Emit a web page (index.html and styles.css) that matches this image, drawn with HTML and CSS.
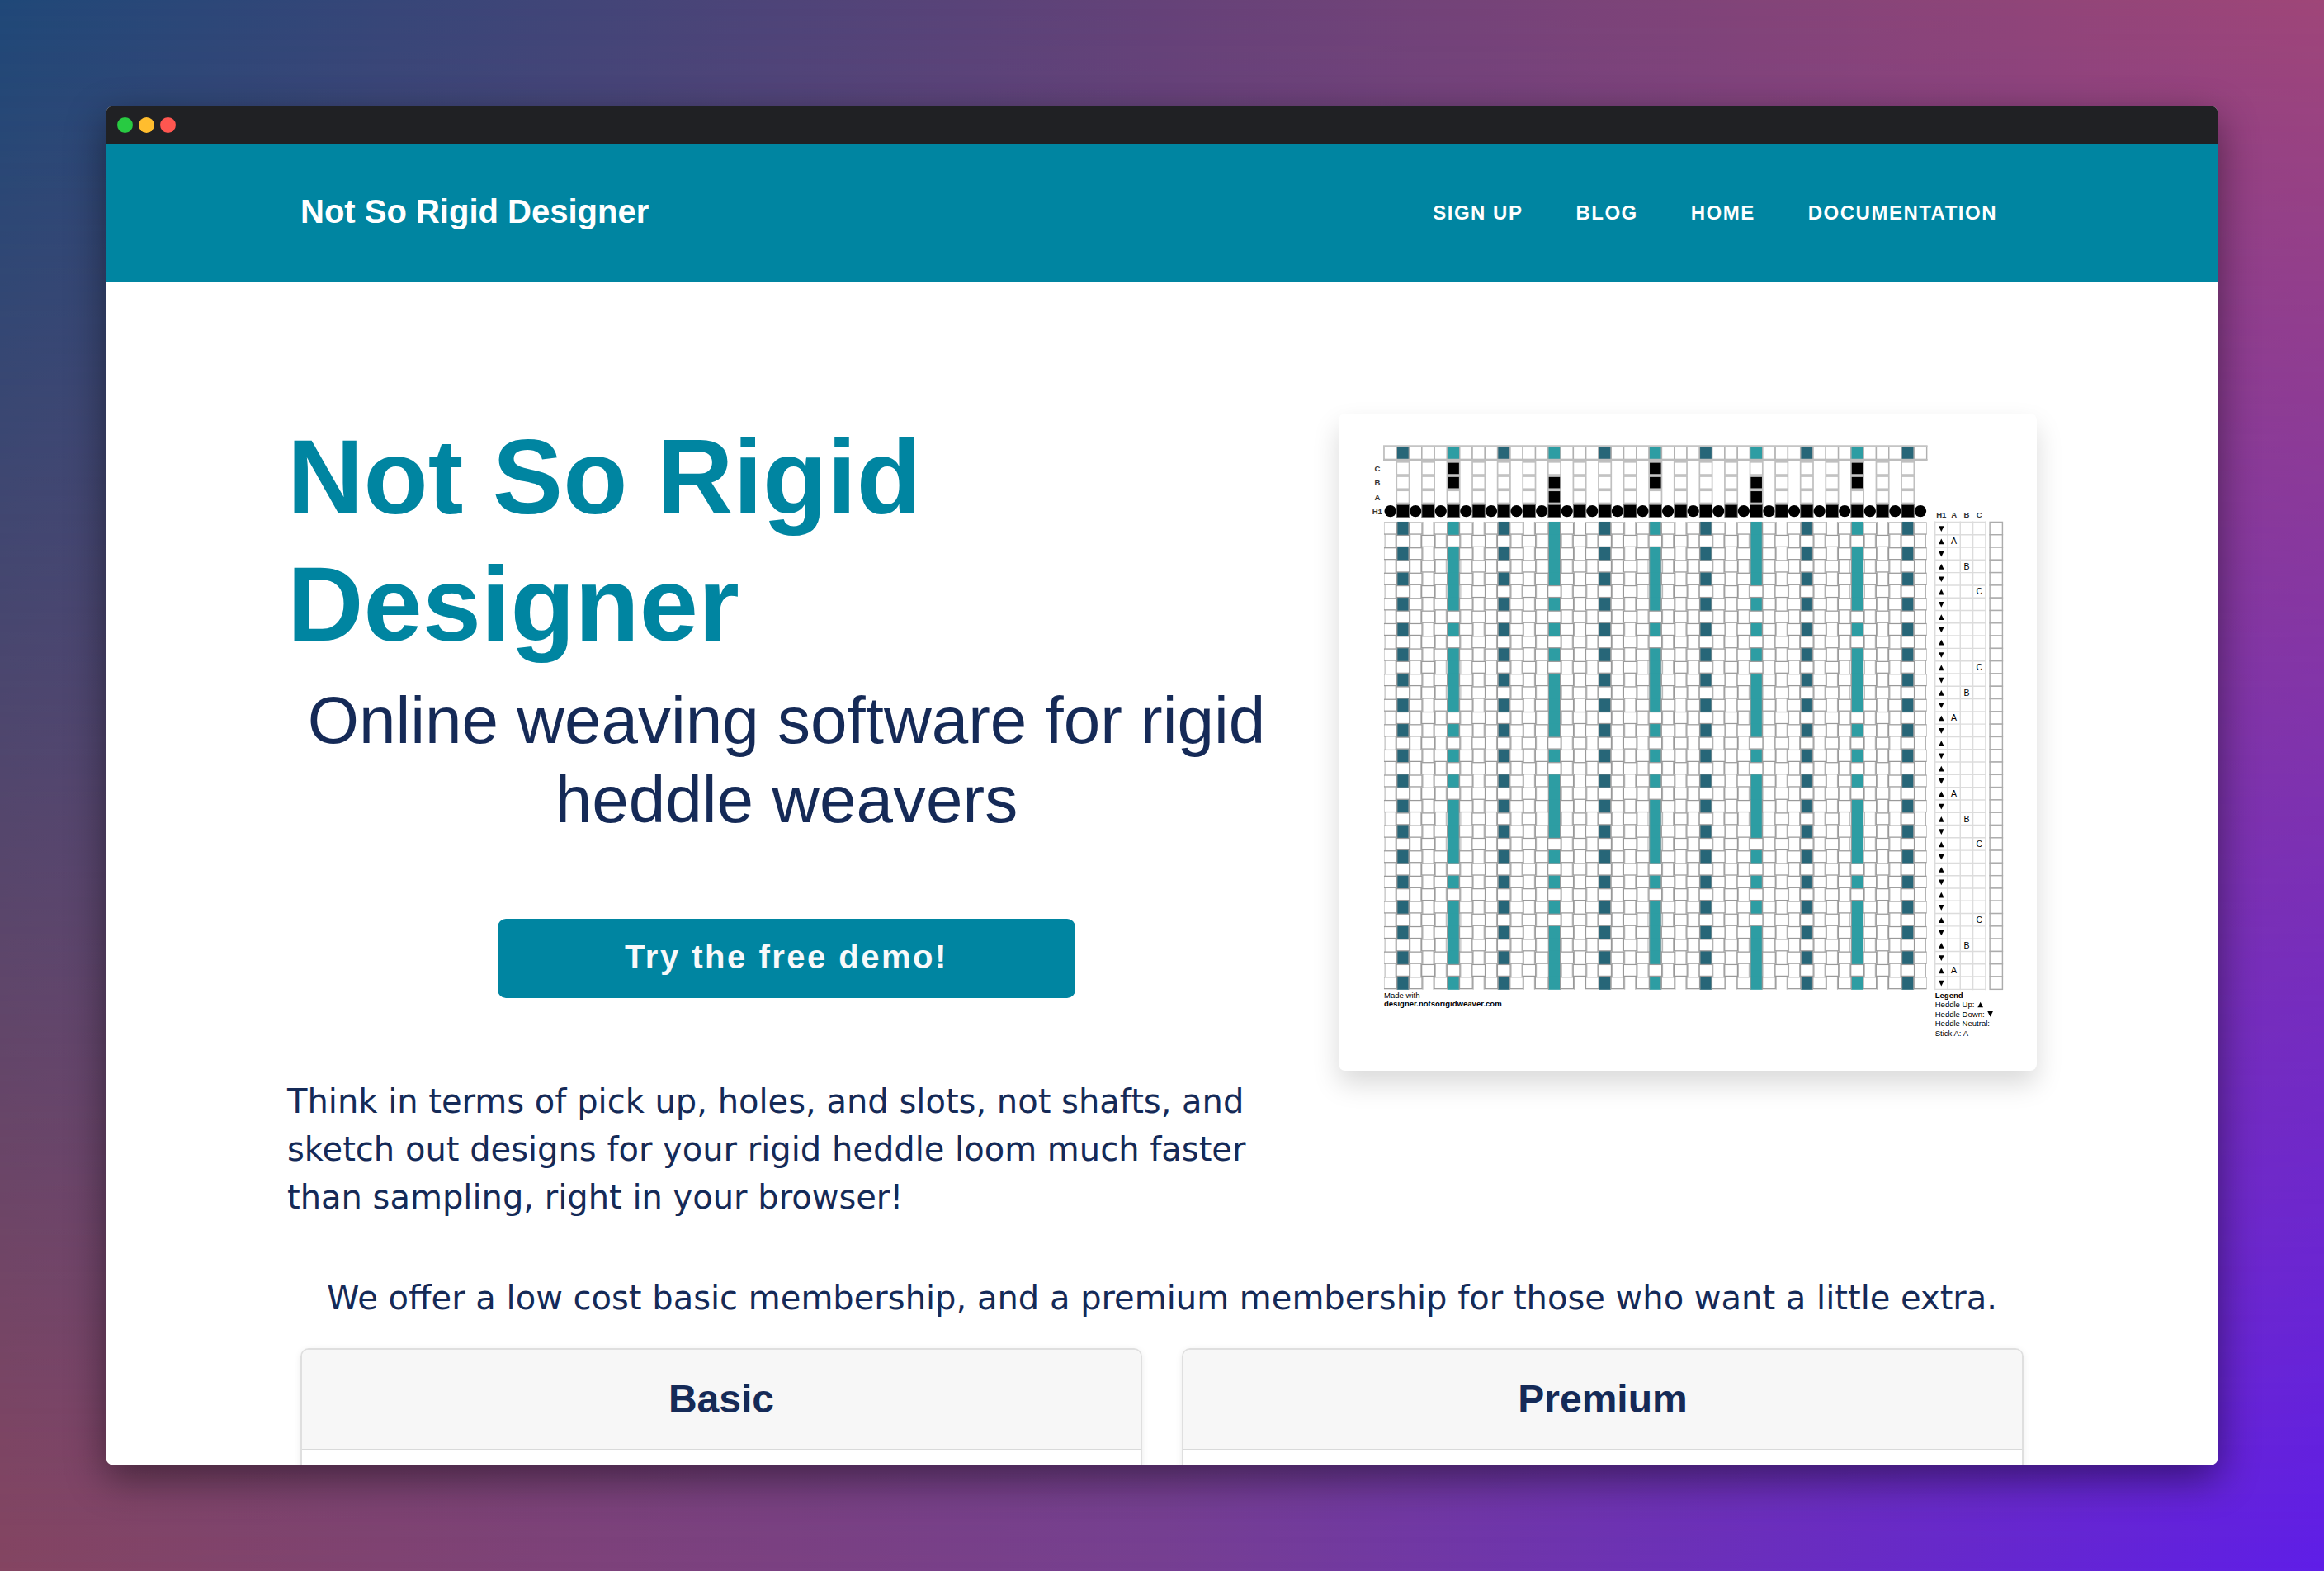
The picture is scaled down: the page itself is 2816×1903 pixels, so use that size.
FILE: index.html
```html
<!DOCTYPE html>
<html lang="en">
<head>
<meta charset="utf-8">
<title>Not So Rigid Designer</title>
<link rel="stylesheet" href="styles.css">
</head>
<body>
<div class="window">
  <div class="titlebar">
    <span class="dot dot-green"></span>
    <span class="dot dot-yellow"></span>
    <span class="dot dot-red"></span>
  </div>
  <header class="site-header">
    <a class="brand" href="#">Not So Rigid Designer</a>
    <nav class="site-nav">
      <a href="#">SIGN UP</a>
      <a href="#">BLOG</a>
      <a href="#">HOME</a>
      <a href="#">DOCUMENTATION</a>
    </nav>
  </header>
  <main class="content">
    <section class="hero">
      <div class="hero-text">
        <h1>Not So Rigid Designer</h1>
        <p class="subtitle">Online weaving software for rigid heddle weavers</p>
        <button class="cta" type="button">Try the free demo!</button>
        <p class="lead">Think in terms of pick up, holes, and slots, not shafts, and sketch out designs for your rigid heddle loom much faster than sampling, right in your browser!</p>
      </div>
      <figure class="draft">
        <svg id="draft" viewBox="0 0 885 833" role="img" aria-label="Weaving draft"></svg>
      </figure>
    </section>
    <p class="offer">We offer a low cost basic membership, and a premium membership for those who want a little extra.</p>
    <section class="plans">
      <article class="plan">
        <h2>Basic</h2>
        <div class="plan-body"></div>
      </article>
      <article class="plan">
        <h2>Premium</h2>
        <div class="plan-body"></div>
      </article>
    </section>
  </main>
</div>
<script src="draft.js"></script>
</body>
</html>
```
FILE: styles.css
```css
* {
  box-sizing: border-box;
}

body {
  position: relative;
  margin: 0;
  height: 100vh;
  padding: 128px;
  overflow: hidden;
  font-family: "Liberation Sans", Arial, sans-serif;
  color: #152a57;
  background: linear-gradient(to right, #854562, #763f92 50%, #5f1ee8);
}

body::before {
  content: "";
  position: absolute;
  inset: 0;
  background: linear-gradient(to right, #1f4878, #654278 50%, #9f4678);
  -webkit-mask-image: linear-gradient(to bottom, #000, transparent);
  mask-image: linear-gradient(to bottom, #000, transparent);
}

.window {
  position: relative;
  height: 100%;
  overflow: hidden;
  border-radius: 10px;
  background: #fff;
  box-shadow: 0 16px 48px rgba(0, 0, 0, 0.45);
}

.titlebar {
  display: flex;
  align-items: center;
  gap: 7px;
  height: 47px;
  padding: 0 14px;
  background: #202124;
}

.dot {
  width: 19px;
  height: 19px;
  border-radius: 50%;
}

.dot-green { background: #28ca42; }
.dot-yellow { background: #ffbd2e; }
.dot-red { background: #ff5650; }

.site-header {
  display: flex;
  align-items: center;
  justify-content: space-between;
  height: 166px;
  padding: 0 268px 0 236px;
  background: #0085a1;
}

.site-header a {
  color: #fff;
  font-weight: bold;
  text-decoration: none;
}

.brand {
  padding-bottom: 4px;
  font-size: 40px;
}

.site-nav {
  display: flex;
  gap: 64px;
  font-size: 24px;
  letter-spacing: 0.0625em;
}

.content {
  padding: 160px 188px 0;
}

.hero {
  display: grid;
  grid-template-columns: 7fr 5fr;
  align-items: start;
}

.hero-text {
  display: flex;
  flex-direction: column;
  align-items: flex-start;
  padding: 0 32px;
}

h1 {
  margin: 0;
  font-size: 128px;
  line-height: 154px;
  color: #0085a1;
}

.subtitle {
  align-self: stretch;
  margin: 16px 0 96px;
  font-size: 80px;
  line-height: 96px;
  text-align: center;
}

.cta {
  align-self: center;
  width: 700px;
  height: 96px;
  margin-bottom: 96px;
  padding: 0 0 4px;
  border: 0;
  border-radius: 10px;
  background: #0085a1;
  color: #f8f9fa;
  font: bold 40px "Liberation Sans", Arial, sans-serif;
  letter-spacing: 0.0625em;
}

.lead,
.offer {
  margin: 0;
  font-family: "DejaVu Sans", sans-serif;
  font-size: 40px;
  line-height: 58px;
}

.offer {
  margin: 64px 0 32px;
  text-align: center;
}

.draft {
  margin: 0 32px;
  border-radius: 8px;
  background: #fff;
  box-shadow: 0 16px 32px rgba(0, 0, 0, 0.15);
}

.draft svg {
  display: block;
  width: 100%;
  font-family: "Liberation Sans", Arial, sans-serif;
  font-size: 10px;
}

.draft .bold { font-weight: bold; }
.draft .mid { text-anchor: middle; }
.draft .head { fill: #333; }
.draft .stick { font-size: 11px; }

.plans {
  display: grid;
  grid-template-columns: 1fr 1fr;
  gap: 48px;
  padding: 0 48px;
}

.plan {
  border: 2px solid #dfdfdf;
  border-radius: 10px;
  overflow: hidden;
  box-shadow: 0 2px 8px rgba(0, 0, 0, 0.08);
}

.plan h2 {
  margin: 0;
  padding: 32px;
  font-size: 48px;
  line-height: 56px;
  text-align: center;
  background: #f7f7f7;
  border-bottom: 2px solid #d9dada;
}

.plan-body {
  height: 320px;
}
```
FILE: draft.js
```javascript
const svg = document.getElementById('draft');
const CELL = 16, COLS = 43, ROWS = 37, X0 = 57.5, Y0 = 137.5, TIE_X = 756;
const DARK = '#276678', TEAL = '#2d9da3';
const sticks = { 1: 'A', 3: 'B', 5: 'C', 11: 'C', 13: 'B', 15: 'A', 21: 'A', 23: 'B', 25: 'C', 31: 'C', 33: 'B', 35: 'A' };

function add(name, attrs, text) {
  const el = document.createElementNS('http://www.w3.org/2000/svg', name);
  for (const key in attrs) el.setAttribute(key, attrs[key]);
  if (text) el.textContent = text;
  svg.appendChild(el);
}
function rect(x, y, width, height, fill, stroke, w) {
  add('rect', { x, y, width, height, fill, stroke: stroke || 'none', 'stroke-width': w || 1 });
}
function line(x1, y1, x2, y2, stroke, w) {
  add('line', { x1, y1, x2, y2, stroke, 'stroke-width': w || 1 });
}
function label(x, y, text, cls) {
  add('text', { x, y, class: cls || '' }, text);
}
function arrow(x, y, up) {
  const a = up ? 3.5 : -3.5;
  add('polygon', { points: `${x - 3.5},${y + a} ${x + 3.5},${y + a} ${x},${y - a}` });
}
function color(c) {
  return c % 8 === 1 ? DARK : c % 8 === 5 ? TEAL : '#fff';
}
function threading(c) {
  return c % 16 === 5 ? 'CB' : c % 16 === 13 ? 'BA' : '';
}

// warp colours, pick-up threading and heddle
for (let c = 0; c < COLS; c++) {
  const x = X0 + c * CELL;
  rect(x, 41.5, CELL, 16.5, color(c), '#b0b0b0', 1.5);
  if (c % 2) {
    ['C', 'B', 'A'].forEach((s, i) => {
      rect(x, 61.5 + i * 18, CELL, CELL, threading(c).includes(s) ? '#000' : '#fff', '#c0c0c0', 1.8);
    });
    rect(x, 115.5, CELL, CELL, '#000', '#777', 1);
  } else {
    add('circle', { cx: x + 8, cy: 123.5, r: 7.5 });
  }
}
line(X0 - 1, 41, X0 + COLS * CELL + 1, 41, '#c4c4c4', 2);
line(X0 - 1, 58.5, X0 + COLS * CELL + 1, 58.5, '#bdbdbd', 2);
['C', 'B', 'A', 'H1'].forEach((s, i) => label(49, 73.5 + i * 18, s, 'bold mid head'));

// drawdown: warp first, weft floats over it
function warpUp(r, c) {
  if (r % 2 === 0) return c % 2 === 1;
  return c % 2 === 0 || (sticks[r] !== undefined && threading(c).includes(sticks[r]));
}
for (let r = 0; r < ROWS; r++) {
  for (let c = 0; c < COLS; c++) {
    if (!warpUp(r, c)) continue;
    const x = X0 + c * CELL, y = Y0 + r * CELL;
    const fill = color(c);
    const inset = fill === '#fff' ? 1.2 : 0.6;
    const side = fill === '#fff' ? '#b4b4b4' : '#8f9a9c';
    rect(x + inset, y - 0.5, CELL - 2 * inset, CELL + 1, fill);
    line(x + inset, y - 0.5, x + inset, y + CELL + 0.5, side, 1.1);
    line(x + CELL - inset, y - 0.5, x + CELL - inset, y + CELL + 0.5, side, 1.1);
  }
}
for (let r = 0; r < ROWS; r++) {
  for (let c = 0; c < COLS; c++) {
    if (warpUp(r, c)) continue;
    const x = X0 + c * CELL, y = Y0 + r * CELL;
    rect(x - 0.2, y + 0.7, CELL + 0.4, CELL - 1.4, '#fff', '#999', 1.3);
  }
}
rect(X0 - 3, Y0 - 1, 3, ROWS * CELL + 2, '#fff');
rect(X0 + COLS * CELL, Y0 - 1, 3, ROWS * CELL + 2, '#fff');

// treadling
const bottom = Y0 + ROWS * CELL;
for (let i = 0; i <= 4; i++) line(TIE_X + i * CELL, Y0 - 1, TIE_X + i * CELL, bottom + 1, '#dcdcdc', 1.5);
for (let r = 0; r <= ROWS; r++) {
  line(TIE_X - 1, Y0 + r * CELL, TIE_X + 4 * CELL + 1, Y0 + r * CELL, '#dcdcdc', 1.5);
  if (r < ROWS) rect(825.5, Y0 + r * CELL, CELL, CELL, '#fff', '#acacac', 1.5);
}
['H1', 'A', 'B', 'C'].forEach((s, i) => label(TIE_X + 8 + i * CELL, 131.5, s, 'bold mid head'));
for (let r = 0; r < ROWS; r++) {
  const y = Y0 + r * CELL;
  arrow(TIE_X + 8, y + 8.5, r % 2 === 1);
  if (sticks[r]) label(TIE_X + 8 + ('ABC'.indexOf(sticks[r]) + 1) * CELL, y + 12, sticks[r], 'mid stick');
}

// captions
label(X0, 740.5, 'Made with');
label(X0, 751.5, 'designer.notsorigidweaver.com', 'bold');
label(TIE_X, 740.5, 'Legend', 'bold');
label(TIE_X, 752.5, 'Heddle Up:');
arrow(813.5, 749, true);
label(TIE_X, 764.5, 'Heddle Down:');
arrow(826, 761, false);
label(TIE_X, 776.5, 'Heddle Neutral: –');
label(TIE_X, 788.5, 'Stick A: A');
```
